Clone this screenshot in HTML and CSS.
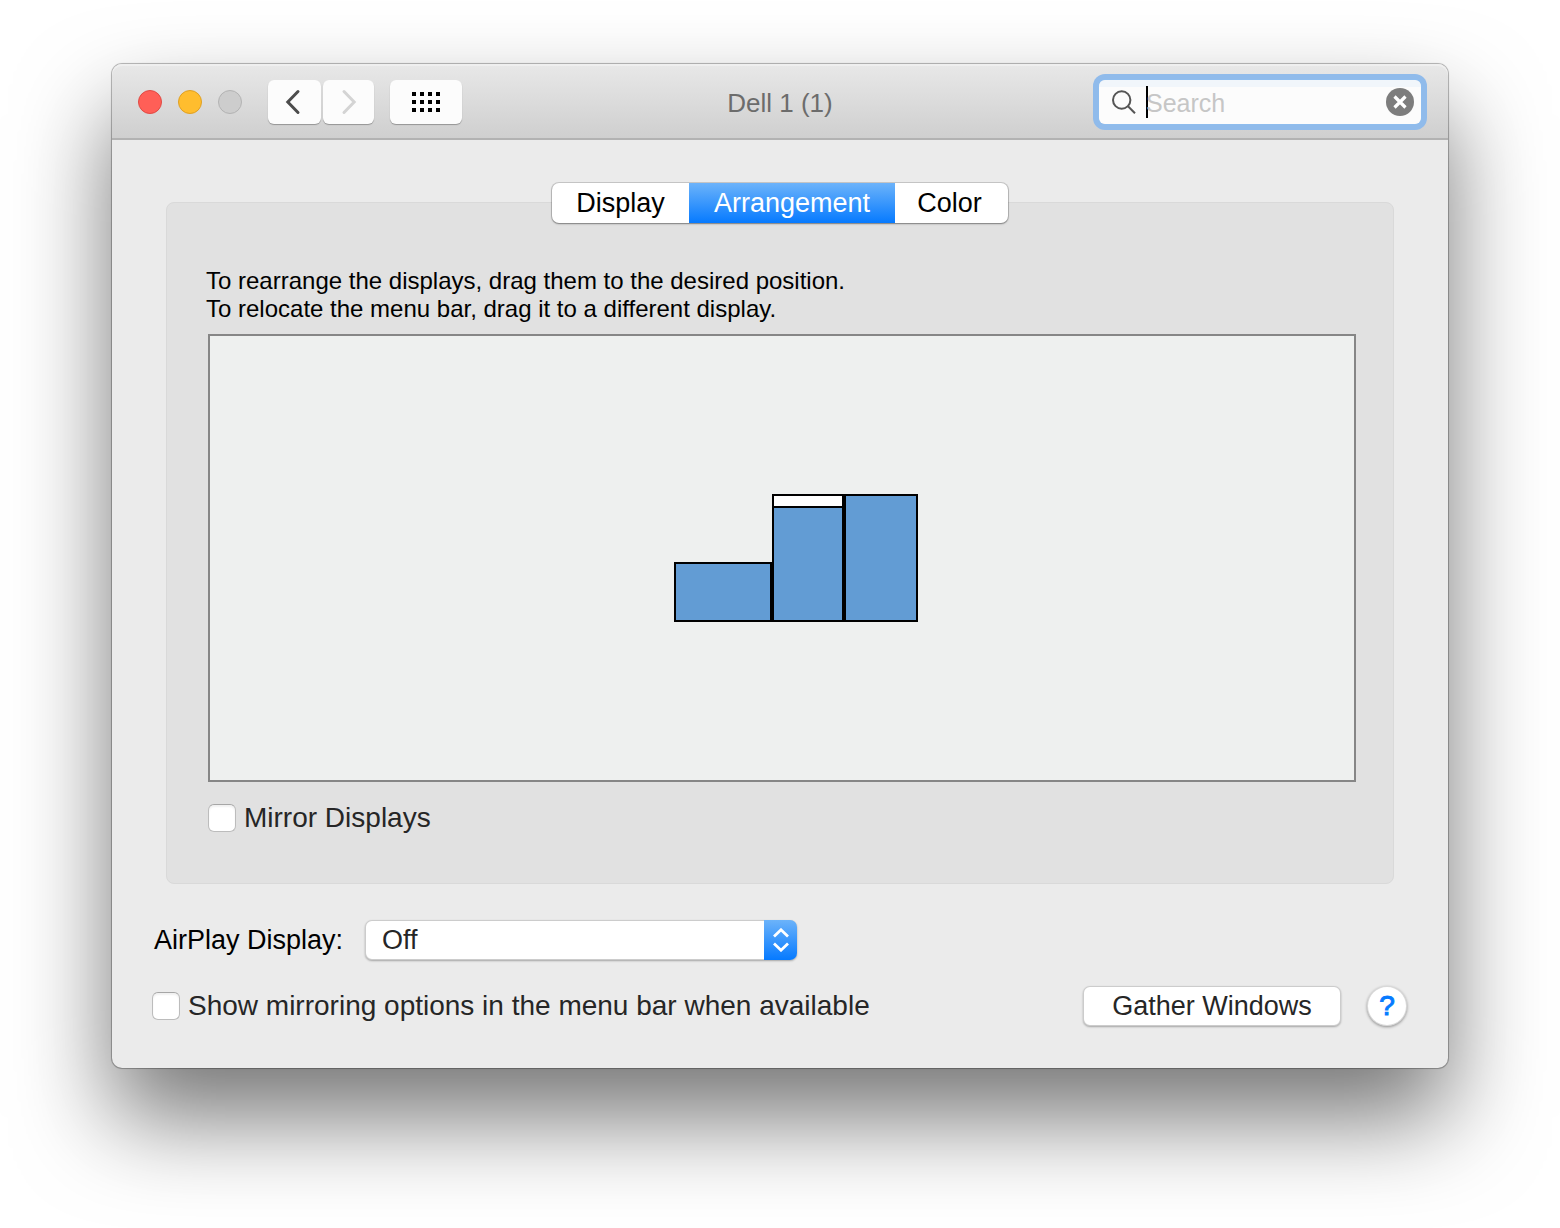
FILE: index.html
```html
<!DOCTYPE html>
<html lang="en">
<head>
    <meta charset="UTF-8">
    <meta name="viewport" content="width=device-width, initial-scale=1.0">
    <title>Dell 1 (1)</title>
    <link rel="stylesheet" href="styles.css">
</head>
<body>
    <main class="window">
        <header class="toolbar">
            <div class="toolbar-left">
                <div class="lights">
                    <button type="button" class="light close" aria-label="Close"></button>
                    <button type="button" class="light minimize" aria-label="Minimize"></button>
                    <button type="button" class="light zoom" aria-label="Zoom" disabled></button>
                </div>
                <div class="nav">
                    <button type="button" class="tool-button back" aria-label="Back">
                        <svg width="16" height="26" viewBox="0 0 16 26"><path d="M13 2.5 L2.8 13 L13 23.5" fill="none" stroke="#4c4c4c" stroke-width="3" stroke-linecap="round"/></svg>
                    </button>
                    <button type="button" class="tool-button forward" aria-label="Forward" disabled>
                        <svg width="16" height="26" viewBox="0 0 16 26"><path d="M3 2.5 L13.2 13 L3 23.5" fill="none" stroke="#d4d4d4" stroke-width="3" stroke-linecap="round"/></svg>
                    </button>
                </div>
                <button type="button" class="tool-button show-all" aria-label="Show All">
                    <svg width="28" height="20" viewBox="0 0 28 20">
                        <path d="M0 0h4v4h-4z M8 0h4v4h-4z M16 0h4v4h-4z M24 0h4v4h-4z M0 8h4v4h-4z M8 8h4v4h-4z M16 8h4v4h-4z M24 8h4v4h-4z M0 16h4v4h-4z M8 16h4v4h-4z M16 16h4v4h-4z M24 16h4v4h-4z"/>
                    </svg>
                </button>
            </div>
            <h1>Dell 1 (1)</h1>
            <div class="search">
                <svg width="24" height="24" viewBox="0 0 24 24"><g fill="none" stroke="#555" stroke-width="2"><circle cx="9.7" cy="10" r="8.7"/><path d="M16 16.3 L23 23.3"/></g></svg>
                <span class="caret"></span>
                <input type="text" placeholder="Search" aria-label="Search">
                <button type="button" class="clear" aria-label="Clear search">
                    <svg width="28" height="28" viewBox="0 0 28 28"><circle cx="14" cy="14" r="14" fill="#7d7d7d"/><path d="M8.5 8.5 L19.5 19.5 M19.5 8.5 L8.5 19.5" stroke="#fff" stroke-width="3.2"/></svg>
                </button>
            </div>
        </header>

        <div class="content">
            <div class="tabs">
                <button type="button">Display</button>
                <button type="button" class="active">Arrangement</button>
                <button type="button">Color</button>
            </div>

            <section class="panel">
                <p>To rearrange the displays, drag them to the desired position.<br>
                To relocate the menu bar, drag it to a different display.</p>
                <div class="arrangement">
                    <div class="screens">
                        <div class="screen small"></div>
                        <div class="screen main"><div class="menubar"></div></div>
                        <div class="screen right"></div>
                    </div>
                </div>
                <label class="check"><input type="checkbox">Mirror Displays</label>
            </section>

            <div class="airplay">
                <label for="airplay">AirPlay Display:</label>
                <div class="select">
                    <select id="airplay">
                        <option>Off</option>
                    </select>
                    <span class="arrows">
                        <svg width="16" height="24" viewBox="0 0 16 24"><path d="M1 8.5 L8 1.8 L15 8.5 M1 15.5 L8 22.2 L15 15.5" fill="none" stroke="#fff" stroke-width="2.8"/></svg>
                    </span>
                </div>
            </div>

            <footer>
                <label class="check"><input type="checkbox">Show mirroring options in the menu bar when available</label>
                <div class="actions">
                    <button type="button" class="gather">Gather Windows</button>
                    <button type="button" class="help" aria-label="Help">?</button>
                </div>
            </footer>
        </div>
    </main>
</body>
</html>
```
FILE: styles.css
```css
* {
    box-sizing: border-box;
}
body {
    margin: 0;
    padding: 64px 112px 160px;
    background: #fff;
    font-family: "Liberation Sans", Arial, sans-serif;
    font-size: 27px;
    line-height: 32px;
    color: #262626;
}
button, input, select {
    font: inherit;
    color: inherit;
    margin: 0;
    padding: 0;
    border: none;
}
svg {
    display: block;
}
.window {
    background: #ebebeb;
    border-radius: 10px;
    box-shadow: 0 0 0 1px rgba(0, 0, 0, 0.2), 0 0 2px rgba(0, 0, 0, 0.3), 0 50px 95px rgba(0, 0, 0, 0.54);
}

/* toolbar */
.toolbar {
    display: grid;
    grid-template-columns: 1fr auto 1fr;
    align-items: center;
    height: 76px;
    padding: 2px 26px 0;
    background: linear-gradient(#e8e8e8, #cfcfcf);
    border-bottom: 2px solid #b2b2b2;
    border-radius: 10px 10px 0 0;
    box-shadow: inset 0 2px 0 #efefef;
}
.toolbar-left, .lights, .nav {
    display: flex;
    align-items: center;
}
.lights {
    gap: 16px;
    margin-right: 26px;
}
.light {
    width: 24px;
    height: 24px;
    border: 1px solid #b3b3b3;
    border-radius: 50%;
    background: #cdcdcd;
}
.close {
    background: #ff5f57;
    border-color: #e04a44;
}
.minimize {
    background: #ffbd2e;
    border-color: #dfa023;
}
.nav {
    gap: 2px;
    margin-right: 16px;
}
.tool-button {
    display: flex;
    align-items: center;
    justify-content: center;
    height: 44px;
    border-radius: 6px;
    background: #fcfcfc;
    box-shadow: 0 1px 1px rgba(0, 0, 0, 0.3);
}
.back {
    width: 53px;
    padding-right: 4px;
}
.forward {
    width: 51px;
}
.show-all {
    width: 72px;
}
h1 {
    margin: 0;
    padding-top: 2px;
    font-size: 26px;
    font-weight: normal;
    color: #6c6c6c;
}
.search {
    display: flex;
    align-items: center;
    justify-self: end;
    width: 322px;
    height: 44px;
    margin-right: 1px;
    padding: 0 7px 0 13px;
    border-radius: 6px;
    background: linear-gradient(#f1f6fb 7px, #fcfcfc 7px);
    box-shadow: 0 0 0 1px #8fbdee, 0 0 0 6px #90bbeb;
}
.caret {
    width: 2px;
    height: 32px;
    margin: 0 -2px 0 10px;
    background: #000;
}
.search input {
    flex: 1;
    min-width: 0;
    padding-top: 2px;
    background: none;
    font-size: 25px;
    outline: none;
}
.search input::placeholder {
    color: #c6c6c6;
    opacity: 1;
}
.clear {
    background: none;
}

/* content */
.content {
    padding: 43px 40px 42px;
}
.tabs {
    position: relative;
    display: grid;
    grid-template-columns: 137px 206px 113px;
    justify-content: center;
    width: 456px;
    margin: 0 auto -21px;
    border-radius: 7px;
    background: #fff;
    box-shadow: 0 0 0 1px rgba(0, 0, 0, 0.15), 0 1px 2px rgba(0, 0, 0, 0.35);
}
.tabs button {
    height: 40px;
    background: none;
    color: #000;
}
.tabs button:last-child {
    padding-right: 4px;
}
.tabs .active {
    background: linear-gradient(#6cb3fa, #067aff);
    color: #fff;
}
.panel {
    margin: 0 14px;
    padding: 64px 37px 49px 39px;
    border: 1px solid #d9d9d9;
    border-radius: 8px;
    background: #e1e1e1;
}
.panel p {
    margin: 0 0 11px;
    font-size: 24px;
    line-height: 28px;
    color: #000;
}
.arrangement {
    display: flex;
    align-items: center;
    justify-content: center;
    height: 448px;
    margin: 0 0 20px 2px;
    padding-left: 28px;
    border: 2px solid #868686;
    background: #eef0ef;
}
.screens {
    display: flex;
    align-items: flex-end;
}
.screen {
    height: 128px;
    border: 2px solid #000;
    background: #629cd4;
}
.small {
    width: 98px;
    height: 60px;
}
.main {
    width: 72px;
}
.right {
    width: 74px;
}
.menubar {
    height: 12px;
    border-bottom: 2px solid #000;
    background: #fff;
}
.check {
    display: flex;
    align-items: center;
    gap: 8px;
    font-size: 28px;
}
.panel .check {
    margin-left: 2px;
}
.check input {
    appearance: none;
    width: 28px;
    height: 28px;
    border: 1px solid #bcbcbc;
    border-top-color: #a6a6a6;
    border-radius: 6px;
    background: #fff;
    box-shadow: inset 0 2px 2px rgba(0, 0, 0, 0.06);
}
.airplay {
    display: flex;
    align-items: center;
    margin: 36px 0 26px 2px;
    color: #000;
}
.airplay label {
    width: 211px;
}
.select {
    position: relative;
    width: 432px;
}
.select select {
    display: block;
    appearance: none;
    width: 100%;
    height: 40px;
    padding: 0 48px 0 17px;
    border-radius: 7px;
    background: #fff;
    color: #262626;
    box-shadow: inset 0 0 0 1px rgba(0, 0, 0, 0.2), 0 1px 2px rgba(0, 0, 0, 0.3);
}
.arrows {
    position: absolute;
    top: 0;
    right: 0;
    display: flex;
    align-items: center;
    justify-content: center;
    width: 33px;
    height: 40px;
    border-radius: 0 7px 7px 0;
    background: linear-gradient(#6cb3fa, #067aff);
    pointer-events: none;
}
footer {
    display: flex;
    align-items: center;
    justify-content: space-between;
    padding-right: 1px;
}
.actions {
    display: flex;
    align-items: center;
    gap: 26px;
}
.gather {
    width: 258px;
    height: 40px;
    border-radius: 7px;
    background: #fff;
    box-shadow: inset 0 0 0 1px rgba(0, 0, 0, 0.2), 0 1px 2px rgba(0, 0, 0, 0.3);
}
.help {
    width: 40px;
    height: 40px;
    border-radius: 50%;
    background: #fff;
    color: #067aff;
    font-size: 28px;
    -webkit-text-stroke: 1px #067aff;
    box-shadow: inset 0 0 0 1px rgba(0, 0, 0, 0.15), 0 1px 3px rgba(0, 0, 0, 0.4);
}
```
